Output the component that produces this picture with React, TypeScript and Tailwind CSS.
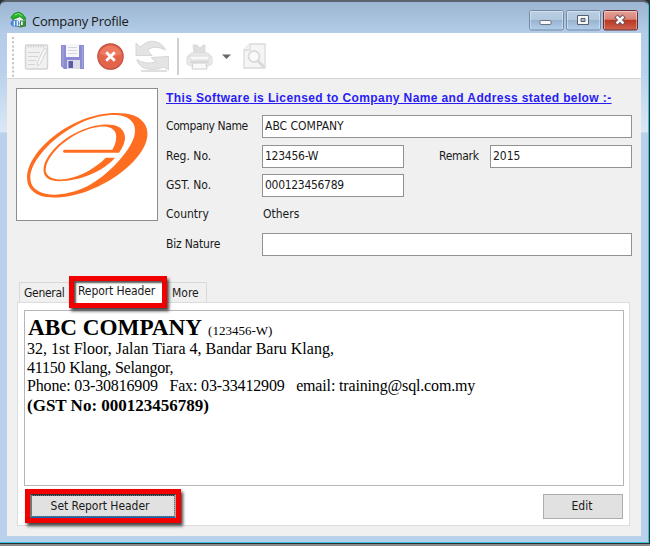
import type { ReactNode } from "react";

const ui = "font-['DejaVu_Sans_Condensed','DejaVu_Sans',sans-serif] [font-stretch:condensed]";

function Field({ children, className = "" }: { children?: ReactNode; className?: string }) {
  return (
    <div className={`flex h-[23px] items-center whitespace-pre border border-[#929292] bg-white pl-[2px] ${className}`}>
      {children}
    </div>
  );
}

function AppIcon() {
  return (
    <svg width="18" height="18" viewBox="0 0 18 18">
      <path d="M3 8 L10 4 L15.5 9 V15 L10 16 L4 14Z" fill="#e9f1ed" stroke="#47714e" />
      <path d="M.8 6.5 L4 2.5 L9 1 L12.5 3 L16 7.5 L14 9 L10 5.5 L3 8.5Z" fill="#24b427" stroke="#147b27" strokeWidth=".7" />
      <path d="M4.5 4 L9 2.5 L12 5" fill="none" stroke="#8de578" />
      <path d="M10 9.5 H15.5 V15 L10 16.2Z" fill="#368b3c" />
      <path d="M11 10.5 H12.7 V14 H11Z" fill="white" />
      <ellipse cx="5" cy="12.3" rx="4.4" ry="3.4" fill="#4a86d5" />
      <path d="M4.3 10 V14.7 M7.3 10 V14.7" stroke="white" strokeWidth="1.2" />
    </svg>
  );
}

function Logo() {
  return (
    <svg className="h-full w-full" viewBox="51 27 420 393" fill="#ff6e20" fillRule="evenodd">
      <path d="M81 292 C81 235 150 160 240 122 C300 97 360 94 400 106 C435 118 449 150 440 180 C425 240 340 305 265 332 C205 354 150 358 118 346 C92 334 81 318 81 292Z M91 292 C91 245 155 170 243 128 C290 107 340 101 368 108 C400 117 410 140 403 168 C390 215 325 285 262 319 C205 347 150 349 122 337 C100 328 91 312 91 292Z" />
      <path d="M357 218 C371 197 379 178 373 161 C365 135 333 128 286 137 C216 151 145 207 132 257 C124 292 148 306 190 303 C248 299 311 272 345 233 H317 C292 260 243 290 198 297 C158 303 131 288 138 261 C147 218 210 162 277 144 C316 134 338 140 346 157 C352 175 347 193 337 209 H194 Q189 209 189 214 Q189 218 194 218Z" />
    </svg>
  );
}

function Toolbar() {
  return (
    <div className="h-[46px] border-b border-[#d6d6d6] bg-white">
      <svg width="270" height="45" viewBox="7 33 270 45">
        <path d="M13 37 V78" stroke="#c2c2c2" strokeWidth="2" strokeDasharray="2 2.2" />
        <g fill="#f1f1f1" stroke="#d4d4d4">
          <rect x="25.5" y="45" width="22" height="24" rx="1.5" strokeWidth="1.5" />
          <path d="M28 46.5 H45" stroke="#c9c9c9" strokeWidth="2" strokeDasharray="1 1.5" />
          <path d="M28 52.5 H40 M28 56.5 H38 M28 60.5 H36 M28 64.5 H35" fill="none" />
          <path d="M37.5 62 L44.5 48 L47 49.5 L40.5 63.5 L37.5 66Z" fill="#f8f8f8" />
        </g>
        <path d="M61 45 H84 V69 H64 L61 66Z" fill="#8c8cd4" />
        <path d="M63 46 V66 M82.5 46 V68" stroke="#a5a5e2" />
        <path d="M66 44 H79 V57 H66Z" fill="#f6f6f9" />
        <path d="M68 47.5 H77 M68 50.5 H77 M68 53.5 H77" stroke="#d5d5df" />
        <path d="M67 60 H80 V69 H67Z" fill="#dcdce4" />
        <path d="M68.5 61 H73 V68 H68.5Z" fill="#5c5cab" />
        <circle cx="110.5" cy="56.5" r="12.7" fill="#e4644b" stroke="#bf5445" strokeWidth="1.2" />
        <path d="M99.5 54 A11.5 11.5 0 0 1 121.5 54 Q111 59 99.5 54Z" fill="#f0826a" opacity=".7" />
        <path d="M106.2 52.2 L114.8 60.8 M114.8 52.2 L106.2 60.8" stroke="white" strokeWidth="2.8" />
        <g fill="#e4e4e4" stroke="#d6d6d6" strokeLinejoin="round">
          <path d="M136 43 L140 47 Q150 38 159 43 Q164 46 165.5 50 Q156 45 149 49 L148 51 L152 55.5 H136Z" />
          <path d="M168.5 56.5 V70 L164 67 Q152 72 142 67 Q137 63 137 59.5 Q145 65 156 62 L151 57.5Z" />
          <path d="M141 71 H167" strokeWidth="2" stroke="#dfdfdf" />
        </g>
        <g fill="#e9e9e9" stroke="#dcdcdc" strokeLinejoin="round">
          <path d="M193 45 H197 L200 48 L203 45 H205 V54 H194Z" fill="#dedede" />
          <path d="M191 53 H208 L212 57 V64 L208 66 H191 L187 64 V57Z" />
          <path d="M189 56 H210 L208 60 H191Z" fill="#f7f7f7" />
          <path d="M193 63 H206 L207 69 H192Z" fill="#f9f9f9" stroke="#cfcfcf" />
          <path d="M190 62 H209" stroke="#d5d5d5" strokeWidth="1.5" />
        </g>
        <path d="M178 38 V75" stroke="#b1b1b1" strokeWidth="1.2" />
        <path d="M222 54.5 H231 L226.5 59Z" fill="#686868" />
        <g fill="#f5f5f5" stroke="#dadada" strokeWidth="1.3">
          <path d="M250 44 H265 V68 H244 V50Z" />
          <path d="M250 44 V50 H244" />
          <circle cx="254" cy="56.5" r="5.5" fill="#fafafa" strokeWidth="1.8" />
          <path d="M258 61 L264.5 67.5" strokeWidth="3" />
        </g>
      </svg>
    </div>
  );
}

function WindowControls() {
  return (
    <svg className="absolute left-[528px] top-[9px]" width="112" height="22" viewBox="528 9 112 22">
      <defs>
        <linearGradient id="control" x2="0" y2="1"><stop stopColor="#bacfe3" /><stop offset=".48" stopColor="#b0c7dd" /><stop offset=".5" stopColor="#98b3cf" /><stop offset="1" stopColor="#b2cfeb" /></linearGradient>
        <linearGradient id="close" x2="0" y2="1"><stop stopColor="#e6a397" /><stop offset=".45" stopColor="#d98478" /><stop offset=".5" stopColor="#b83721" /><stop offset="1" stopColor="#cf6350" /></linearGradient>
      </defs>
      <rect x="529.5" y="10.5" width="34" height="19.5" rx="2" fill="url(#control)" stroke="#7189a2" />
      <rect x="566.5" y="10.5" width="34" height="19.5" rx="2" fill="url(#control)" stroke="#7189a2" />
      <rect x="603.5" y="10.5" width="34" height="19.5" rx="2" fill="url(#close)" stroke="#682e38" />
      <path d="M530.5 29 V11.5 H562.5 V29 M567.5 29 V11.5 H599.5 V29 M604.5 29 V11.5 H636.5 V29" fill="none" stroke="white" opacity=".4" />
      <rect x="540" y="20.5" width="11" height="4" rx="1" fill="#f8f8f8" stroke="#68727d" />
      <path d="M577.5 15.5 H588.5 V24.5 H577.5Z M581 18.5 V21.5 H585 V18.5Z" fill="#f5f5f5" fillRule="evenodd" stroke="#56606c" />
      <path d="M616 16 L624 24 M624 16 L616 24" stroke="#5e4a51" strokeWidth="4.5" />
      <path d="M616.5 16.5 L623.5 23.5 M623.5 16.5 L616.5 23.5" stroke="#f4f4f4" strokeWidth="2.5" />
    </svg>
  );
}

export default function App() {
  return (
    <div className={`relative h-[546px] w-[650px] overflow-hidden border-b-2 border-b-[#8a8a8a] bg-[#2b3035] text-[12px] leading-[15px] text-[#191919] ${ui}`}>
      <div className="h-[543px] w-[649px] rounded-t-[6px] border-b border-r border-t-2 border-b-[#36c4e0] border-r-[#36c4e0] border-t-[#5b636e] bg-[linear-gradient(180deg,#9bb5d2_0px,#b4cce7_31px,#b9d1eb_70px,#dbe8f5_130px,#b9d1eb_131px)] pr-[7px]">
        <header className="flex h-[31px] items-center">
          <div className="ml-[10px] mt-[5px]"><AppIcon /></div>
          <div className="ml-[4px] mt-[7px] whitespace-nowrap font-['Open_Sans','Noto_Sans',sans-serif] text-[13px] tracking-[-0.25px] [font-stretch:normal]">Company Profile</div>
          <WindowControls />
        </header>
        <main className="ml-[7px] h-[503px] w-[634px] bg-[#f0f0f0]">
          <Toolbar />
          <div className="flex h-[203px] pl-[9px] pt-[9px]">
            <div className="h-[133px] w-[142px] border border-[#8d8d8d] bg-white"><Logo /></div>
            <div className="ml-2 w-[466px]">
              <h1 className="h-[27px] whitespace-nowrap pt-[3px] font-['Liberation_Sans',sans-serif] text-[12px] font-bold leading-[15px] tracking-[0.385px] text-[#2a1cf5] underline underline-offset-1">This Software is Licensed to Company Name and Address stated below :-</h1>
              <div className="flex h-[29.5px]"><label className="w-24 pt-1 tracking-[-0.4px]">Company Name</label><Field className="w-[370px]">ABC COMPANY</Field></div>
              <div className="flex h-[29.5px]"><label className="w-24 pt-1">Reg. No.</label><Field className="w-[142px] tracking-[-0.25px]">123456-W</Field><label className="ml-[35px] w-[51px] pt-1 tracking-[-0.3px]">Remark</label><Field className="w-[142px]">2015</Field></div>
              <div className="flex h-[29.5px]"><label className="w-24 pt-1">GST. No.</label><Field className="w-[142px] tracking-[-0.3px]">000123456789</Field></div>
              <div className="flex h-[29.5px]"><label className="w-[97px] pt-[3px]">Country</label><span className="pt-[3px]">Others</span></div>
              <div className="flex h-[29.5px]"><label className="w-24 pt-1 tracking-[-0.2px]">Biz Nature</label><Field className="w-[370px]" /></div>
            </div>
          </div>
          <div className="relative ml-[10px] flex h-5 w-[613px] pl-[2px]">
            <div className="w-[52px] border border-b-0 border-[#d9d9d9] pl-[4px] pt-[3px] tracking-[-0.3px]">General</div>
            <div className="absolute left-[52px] top-[-6px] h-8 w-[98px] whitespace-nowrap border-[5px] border-[#f20000] bg-white pl-1 pt-[3px] tracking-[-0.1px] shadow-[2px_3px_3px_#444,inset_2px_2px_2px_#555]">Report Header</div>
            <div className="ml-[96px] w-[40px] border border-b-0 border-[#d9d9d9] pl-1 pt-[3px]">More</div>
          </div>
          <div className="ml-[10px] h-[224px] w-[613px] border border-[#dcdcdc] bg-white pl-[6px] pt-[7px]">
            <div className="h-[176px] w-[600px] border border-[#b6b6ba] bg-white pl-[2px] pt-[4px] font-['Liberation_Serif',serif] text-[16px] leading-[18.5px] text-black">
              <div className="flex h-[25px] items-baseline whitespace-pre pl-px leading-[25px]"><strong className="text-[23.2px]">ABC COMPANY</strong><span className="ml-[6px] text-[13px]">(123456-W)</span></div>
              <div className="whitespace-pre">32, 1st Floor, Jalan Tiara 4, Bandar Baru Klang,</div>
              <div className="whitespace-pre tracking-[-0.2px]">41150 Klang, Selangor,</div>
              <div className="whitespace-pre tracking-[-0.16px]">Phone: 03-30816909   Fax: 03-33412909   email: training@sql.com.my</div>
              <strong className="block pt-[1px] text-[17px]">(GST No: 000123456789)</strong>
            </div>
            <div className="flex justify-between pr-[6px]">
              <div className="ml-[1px] mt-[3px] h-[34px] w-[156px] border-[5px] border-[#f20000] shadow-[2px_3px_3px_#444]">
                <button className="block h-6 w-[146px] border-2 border-b-[#1668b5] border-l-[#747474] border-r-[#aaa] border-t-[#30323a] bg-[#e1e1e1] pr-[6px] text-center tracking-[-0.05px] outline-dotted outline-1 -outline-offset-2 outline-[#777]">Set Report Header</button>
              </div>
              <button className="mt-2 h-[25px] w-20 border border-[#adadad] bg-[#e1e1e1] pr-[2px]">Edit</button>
            </div>
          </div>
        </main>
      </div>
    </div>
  );
}
